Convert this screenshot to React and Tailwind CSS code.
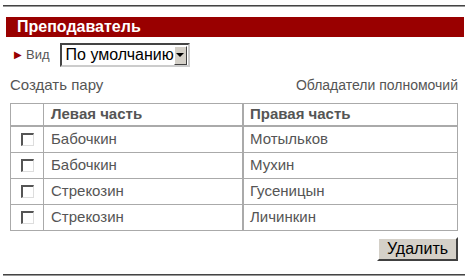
import React from "react";

const rows = [
  ["Бабочкин", "Мотыльков"],
  ["Бабочкин", "Мухин"],
  ["Стрекозин", "Гусеницын"],
  ["Стрекозин", "Личинкин"],
];

const Checkbox = () => (
  <span className="inline-block w-[13px] h-[13px] bg-white border-t-2 border-l-2 border-t-[#555] border-l-[#555] border-b border-r border-b-[#ddd] border-r-[#ddd] align-middle" />
);

const App = () => {
  return (
    <div
      className="w-[471px] h-[279px] bg-white overflow-hidden"
      style={{ fontFamily: '"Liberation Sans", Arial, sans-serif' }}
    >
      <div className="pt-[5px] pl-[3px] pr-[6px]">
        <div className="h-[2px] border-t border-[#444] border-b border-b-[#999]" />
      </div>

      <div className="ml-[6px] mr-[7px] mt-[10px] h-[20px] bg-[#990000] flex items-center pl-[11px]">
        <span className="text-white font-bold text-[16px] leading-none">Преподаватель</span>
      </div>

      <div className="flex items-center mt-[6px] pl-[14px] h-[24px]">
        <span className="text-[#990000] text-[10px] leading-none mr-[4px]">▶</span>
        <span className="text-[#555] text-[13px] mr-[10px]">Вид</span>
        <div className="flex items-center h-[24px] w-[130px] border-2 border-t-[#444] border-l-[#444] border-b-[#ccc] border-r-[#ccc] bg-white">
          <span className="flex-1 text-black text-[16px] pl-[4px] leading-none whitespace-nowrap">По умолчанию</span>
          <span className="w-[16px] h-[19px] mr-[1px] bg-[#d4d0c8] border border-t-white border-l-white border-b-[#404040] border-r-[#404040] flex items-center justify-center">
            <span className="block w-0 h-0 border-l-[4px] border-r-[4px] border-t-[4px] border-l-transparent border-r-transparent border-t-black" />
          </span>
        </div>
      </div>

      <div className="flex justify-between items-center px-[10px] mr-[3px] mt-[9px] h-[18px] text-[15px] text-[#555]">
        <span>Создать пару</span>
        <span className="text-[14px]">Обладатели полномочий</span>
      </div>

      <div className="ml-[10px] mr-[13px] mt-[9px] border border-[#aaa] text-[15px] text-[#555]">
        <div className="flex h-[23px] border-b-2 border-[#aaa]">
          <div className="w-[33px] border-r border-[#aaa]" />
          <div className="w-[200px] border-r-2 border-[#aaa] flex items-center pl-[7px] font-bold">Левая часть</div>
          <div className="flex-1 flex items-center pl-[6px] font-bold">Правая часть</div>
        </div>
        {rows.map((r, i) => (
          <div key={i} className={i < rows.length - 1 ? "flex h-[26px] border-b border-[#aaa]" : "flex h-[25px]"}>
            <div className="w-[33px] border-r border-[#aaa] flex items-center justify-center">
              <Checkbox />
            </div>
            <div className="w-[200px] border-r-2 border-[#aaa] flex items-center pl-[7px]">{r[0]}</div>
            <div className="flex-1 flex items-center pl-[6px]">{r[1]}</div>
          </div>
        ))}
      </div>

      <div className="flex justify-end mr-[13px] mt-[6px]">
        <button className="h-[24px] w-[81px] bg-[#d4d0c8] border-2 border-t-white border-l-white border-b-[#404040] border-r-[#404040] text-black text-[16px] leading-none">
          Удалить
        </button>
      </div>

      <div className="pt-[13px] pl-[3px] pr-[6px]">
        <div className="h-[2px] border-t border-[#444] border-b border-b-[#999]" />
      </div>
    </div>
  );
};

export default App;
